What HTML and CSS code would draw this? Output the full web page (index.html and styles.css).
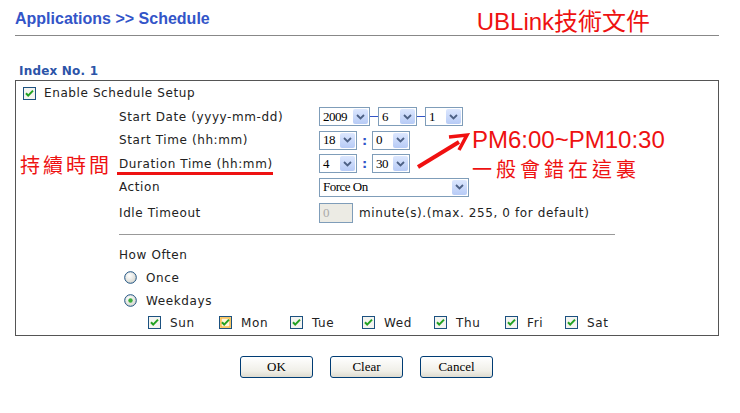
FILE: index.html
```html
<!DOCTYPE html>
<html>
<head>
<meta charset="utf-8">
<link rel="stylesheet" href="styles.css">
</head>
<body>
<div class="page">
  <div class="header">
    <h1 class="title">Applications &gt;&gt; Schedule</h1>
    <div class="brand">UBLink技術文件</div>
  </div>
  <div class="rule"></div>

  <div class="index">Index No. 1</div>
  <div class="box">
    <div class="enable">
      <svg class="cb" width="13" height="13" viewBox="0 0 13 13"><rect x=".5" y=".5" width="12" height="12" fill="#f4f4f0" stroke="#1c5180"/><path d="M3 6.2 L5.2 8.6 L10 3.6" stroke="#21a121" stroke-width="2" fill="none"/></svg>
      <span>Enable Schedule Setup</span>
    </div>
    <div class="rows">
      <div class="row">
        <div class="lbl">Start Date (yyyy-mm-dd)</div>
        <div class="ctl">
          <span class="sel w51"><span class="val">2009</span><span class="btn"><svg width="9" height="6" viewBox="0 0 9 6"><path d="M1 1 L4.5 4.5 L8 1" stroke="#4d6185" stroke-width="1.8" fill="none"/></svg></span></span>
          <span class="dash"></span>
          <span class="sel w39"><span class="val">6</span><span class="btn"><svg width="9" height="6" viewBox="0 0 9 6"><path d="M1 1 L4.5 4.5 L8 1" stroke="#4d6185" stroke-width="1.8" fill="none"/></svg></span></span>
          <span class="dash"></span>
          <span class="sel w38"><span class="val">1</span><span class="btn"><svg width="9" height="6" viewBox="0 0 9 6"><path d="M1 1 L4.5 4.5 L8 1" stroke="#4d6185" stroke-width="1.8" fill="none"/></svg></span></span>
        </div>
      </div>
      <div class="row">
        <div class="lbl">Start Time (hh:mm)</div>
        <div class="ctl">
          <span class="sel w38"><span class="val">18</span><span class="btn"><svg width="9" height="6" viewBox="0 0 9 6"><path d="M1 1 L4.5 4.5 L8 1" stroke="#4d6185" stroke-width="1.8" fill="none"/></svg></span></span>
          <span class="colon">:</span>
          <span class="sel w38"><span class="val">0</span><span class="btn"><svg width="9" height="6" viewBox="0 0 9 6"><path d="M1 1 L4.5 4.5 L8 1" stroke="#4d6185" stroke-width="1.8" fill="none"/></svg></span></span>
        </div>
      </div>
      <div class="row">
        <div class="lbl">Duration Time (hh:mm)</div>
        <div class="ctl">
          <span class="sel w38"><span class="val">4</span><span class="btn"><svg width="9" height="6" viewBox="0 0 9 6"><path d="M1 1 L4.5 4.5 L8 1" stroke="#4d6185" stroke-width="1.8" fill="none"/></svg></span></span>
          <span class="colon">:</span>
          <span class="sel w38"><span class="val">30</span><span class="btn"><svg width="9" height="6" viewBox="0 0 9 6"><path d="M1 1 L4.5 4.5 L8 1" stroke="#4d6185" stroke-width="1.8" fill="none"/></svg></span></span>
        </div>
      </div>
      <div class="row">
        <div class="lbl">Action</div>
        <div class="ctl">
          <span class="sel w150"><span class="val">Force On</span><span class="btn"><svg width="9" height="6" viewBox="0 0 9 6"><path d="M1 1 L4.5 4.5 L8 1" stroke="#4d6185" stroke-width="1.8" fill="none"/></svg></span></span>
        </div>
      </div>
      <div class="row tall">
        <div class="lbl">Idle Timeout</div>
        <div class="ctl">
          <span class="input">0</span>
          <span class="hint">minute(s).(max. 255, 0 for default)</span>
        </div>
      </div>
    </div>
    <div class="sep"></div>
    <div class="often">
      <div class="oh">How Often</div>
      <div class="radio">
        <svg width="13" height="13" viewBox="0 0 13 13"><defs><radialGradient id="rg" cx="40%" cy="35%" r="70%"><stop offset="0" stop-color="#ffffff"/><stop offset="1" stop-color="#d4d4cc"/></radialGradient></defs><circle cx="6.5" cy="6.5" r="5.8" fill="url(#rg)" stroke="#1c5180" stroke-width="1"/></svg>
        <span>Once</span>
      </div>
      <div class="radio">
        <svg width="13" height="13" viewBox="0 0 13 13"><circle cx="6.5" cy="6.5" r="5.8" fill="url(#rg)" stroke="#1c5180" stroke-width="1"/><circle cx="6.5" cy="6.5" r="2.2" fill="#3cae3c"/></svg>
        <span>Weekdays</span>
      </div>
      <div class="days">
        <div class="day d0"><svg width="13" height="13" viewBox="0 0 13 13"><rect x=".5" y=".5" width="12" height="12" fill="#f4f4f0" stroke="#1c5180"/><path d="M3 6.2 L5.2 8.6 L10 3.6" stroke="#21a121" stroke-width="2" fill="none"/></svg><span>Sun</span></div>
        <div class="day d1"><svg width="13" height="13" viewBox="0 0 13 13"><rect x=".5" y=".5" width="12" height="12" fill="#fbe6a8" stroke="#1c5180"/><rect x="2" y="2" width="9" height="9" fill="#fff6dc" stroke="#f6b33a" stroke-width="1.2"/><path d="M3 6.2 L5.2 8.6 L10 3.6" stroke="#21a121" stroke-width="2" fill="none"/></svg><span>Mon</span></div>
        <div class="day d2"><svg width="13" height="13" viewBox="0 0 13 13"><rect x=".5" y=".5" width="12" height="12" fill="#f4f4f0" stroke="#1c5180"/><path d="M3 6.2 L5.2 8.6 L10 3.6" stroke="#21a121" stroke-width="2" fill="none"/></svg><span>Tue</span></div>
        <div class="day d3"><svg width="13" height="13" viewBox="0 0 13 13"><rect x=".5" y=".5" width="12" height="12" fill="#f4f4f0" stroke="#1c5180"/><path d="M3 6.2 L5.2 8.6 L10 3.6" stroke="#21a121" stroke-width="2" fill="none"/></svg><span>Wed</span></div>
        <div class="day d4"><svg width="13" height="13" viewBox="0 0 13 13"><rect x=".5" y=".5" width="12" height="12" fill="#f4f4f0" stroke="#1c5180"/><path d="M3 6.2 L5.2 8.6 L10 3.6" stroke="#21a121" stroke-width="2" fill="none"/></svg><span>Thu</span></div>
        <div class="day d5"><svg width="13" height="13" viewBox="0 0 13 13"><rect x=".5" y=".5" width="12" height="12" fill="#f4f4f0" stroke="#1c5180"/><path d="M3 6.2 L5.2 8.6 L10 3.6" stroke="#21a121" stroke-width="2" fill="none"/></svg><span>Fri</span></div>
        <div class="day d6"><svg width="13" height="13" viewBox="0 0 13 13"><rect x=".5" y=".5" width="12" height="12" fill="#f4f4f0" stroke="#1c5180"/><path d="M3 6.2 L5.2 8.6 L10 3.6" stroke="#21a121" stroke-width="2" fill="none"/></svg><span>Sat</span></div>
      </div>
    </div>
  </div>

  <div class="buttons">
    <button class="b">OK</button>
    <button class="b">Clear</button>
    <button class="b">Cancel</button>
  </div>

  <div class="note-left">持續時間</div>
  <div class="note-underline"></div>
  <svg class="note-arrow" width="60" height="40" viewBox="0 0 60 40"><path d="M3 36 L44 11" stroke="#f01010" stroke-width="4" fill="none"/><path d="M34 6 L52 4 L44 19" stroke="#f01010" stroke-width="3.5" fill="none" stroke-linejoin="miter"/></svg>
  <div class="note-pm">PM6:00~PM10:30</div>
  <div class="note-err">一般會錯在這裏</div>
</div>
</body>
</html>
```
FILE: styles.css
```css
html, body { margin: 0; padding: 0; background: #fff; }
.page { position: relative; width: 740px; height: 413px; overflow: hidden; font-family: "DejaVu Sans", Verdana, sans-serif; font-size: 12px; color: #222; }

.header { display: flex; align-items: center; box-sizing: border-box; height: 35px; padding: 3px 0 0 15px; }
.title { margin: 0; font-family: "Liberation Sans", Arial, sans-serif; font-weight: bold; font-size: 16px; color: #3355c8; }
.brand { margin-left: 267px; font-family: "Liberation Sans", "Noto Sans CJK TC", sans-serif; font-size: 24px; color: #ee1111; }
.rule { margin-left: 15px; width: 704px; height: 1px; background: #888; }

.index { margin: 28px 0 0 19px; height: 16px; font-weight: bold; font-size: 12px; color: #2c54a8; letter-spacing: 0.2px; }
.box { margin-left: 15px; width: 704px; box-sizing: border-box; border: 1px solid #555; height: 256px; letter-spacing: 0.6px; }

.enable { display: flex; align-items: center; height: 24px; padding-left: 7px; gap: 8px; }
.rows { padding-left: 103px; }
.row { display: flex; align-items: center; height: 23.5px; }
.row.tall { height: 27px; }
.lbl { width: 200px; }
.ctl { display: flex; align-items: center; }

.sel { display: inline-flex; align-items: center; box-sizing: border-box; height: 19px; border: 1px solid #7f9db9; background: #fff; font-family: "Liberation Serif", "Times New Roman", serif; font-size: 13px; color: #000; letter-spacing: 0; }
.sel .val { padding-left: 3px; letter-spacing: -0.5px; }
.sel .btn { margin-left: auto; margin-right: 1px; width: 15px; height: 15px; border-radius: 2px; background: linear-gradient(#dce7fe, #b7cbf6); display: flex; align-items: center; justify-content: center; }
.w51 { width: 51px; }
.w39 { width: 39px; }
.w38 { width: 38px; }
.w150 { width: 150px; }
.dash { width: 8px; height: 1px; background: #3355c8; }
.colon { width: 15px; text-align: center; color: #3355c8; font-weight: bold; font-size: 13px; letter-spacing: 0; }

.input { box-sizing: border-box; width: 34px; height: 20px; border: 1px solid #7f9db9; background: #ecebe4; color: #aaa; font-family: "Liberation Serif", serif; font-size: 13px; padding-left: 3px; line-height: 18px; letter-spacing: 0; }
.hint { margin-left: 6px; }

.sep { margin: 8px 0 0 103px; width: 496px; height: 1px; background: #999; }
.often { padding-left: 103px; }
.oh { height: 22px; line-height: 22px; margin-top: 9px; }
.radio { display: flex; align-items: center; height: 23px; padding-left: 5px; gap: 9px; }
.days { display: flex; height: 21px; align-items: center; padding-left: 29px; }
.day { display: flex; align-items: center; gap: 9px; }
.d0 { width: 71px; }
.d1 { width: 71px; }
.d2 { width: 72px; }
.d3 { width: 72px; }
.d4 { width: 71px; }
.d5 { width: 60px; }

.buttons { display: flex; gap: 17px; margin: 20px 0 0 240px; }
.b { width: 73px; height: 22px; box-sizing: border-box; border: 1px solid #003c74; border-radius: 3px; background: linear-gradient(#ffffff, #f0efe8 70%, #dedbcf); font-family: "Liberation Serif", "Times New Roman", serif; font-size: 13px; color: #000; padding: 0; }

.note-left { position: absolute; left: 20px; top: 153px; font-family: "Noto Sans CJK TC", sans-serif; font-size: 20px; color: #ee1111; letter-spacing: 3px; line-height: 24px; }
.note-underline { position: absolute; left: 117px; top: 172px; width: 156px; height: 3px; background: #ee1111; }
.note-arrow { position: absolute; left: 415px; top: 131px; }
.note-pm { position: absolute; left: 472px; top: 128px; font-family: "Liberation Sans", Arial, sans-serif; font-size: 24px; color: #ee1111; line-height: 24px; }
.note-err { position: absolute; left: 472px; top: 157px; font-family: "Noto Sans CJK TC", sans-serif; font-size: 20px; color: #ee1111; letter-spacing: 4px; line-height: 24px; }
```
